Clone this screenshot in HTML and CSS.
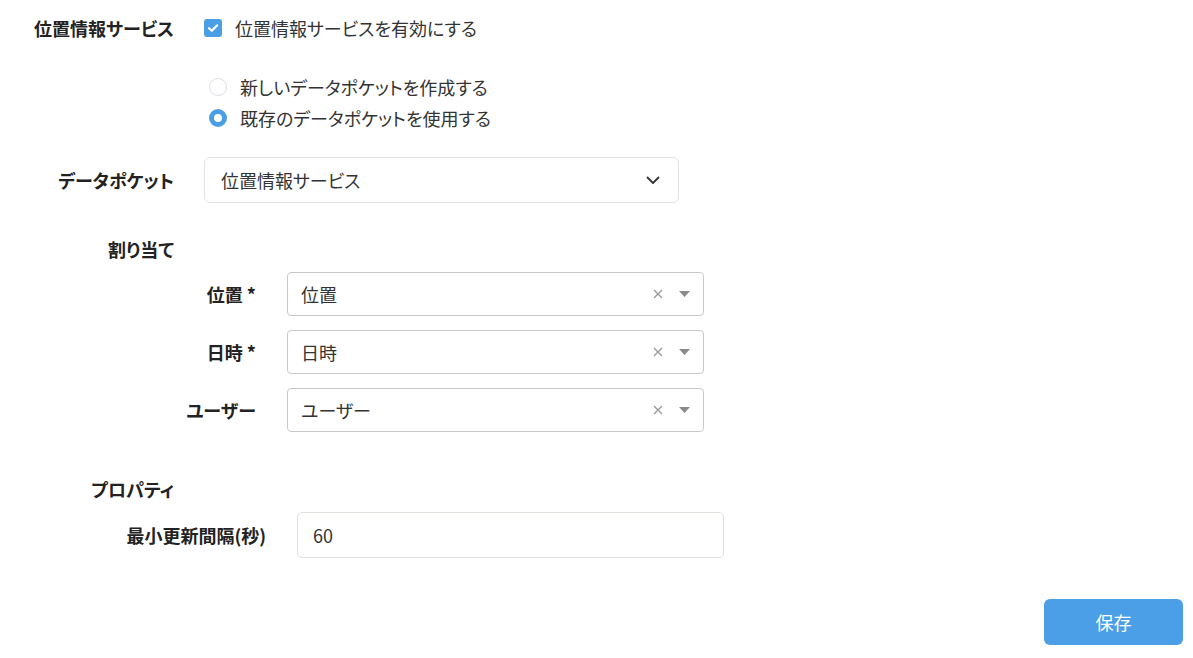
FILE: index.html
```html
<!DOCTYPE html>
<html lang="ja">
<head>
<meta charset="utf-8">
<title>位置情報サービス</title>
<link rel="stylesheet" href="styles.css">
</head>
<body>
<div class="page">
  <div class="row row-enable">
    <div class="label">位置情報サービス</div>
    <label class="check">
      <span class="checkbox"><svg width="12" height="10" viewBox="0 0 12 10"><path d="M2 5.2 L4.8 7.8 L10 2.4" fill="none" stroke="#fff" stroke-width="2.2" stroke-linecap="round" stroke-linejoin="round"/></svg></span>
      <span>位置情報サービスを有効にする</span>
    </label>
  </div>

  <div class="radios">
    <label class="radio"><span class="dot"></span><span>新しいデータポケットを作成する</span></label>
    <label class="radio"><span class="dot on"></span><span>既存のデータポケットを使用する</span></label>
  </div>

  <div class="row row-pocket">
    <div class="label">データポケット</div>
    <div class="select big">
      <span class="value">位置情報サービス</span>
      <svg class="chev" width="14" height="9" viewBox="0 0 14 9"><path d="M1.5 1.5 L7 7 L12.5 1.5" fill="none" stroke="#333" stroke-width="1.8" stroke-linecap="round" stroke-linejoin="round"/></svg>
    </div>
  </div>

  <div class="section-title sec-assign">割り当て</div>

  <div class="assign">
    <div class="arow">
      <div class="label">位置 *</div>
      <div class="select small">
        <span class="value">位置</span>
        <span class="icons"><svg width="10" height="10" viewBox="0 0 10 10"><path d="M1 1 L9 9 M9 1 L1 9" stroke="#9a9a9a" stroke-width="1.4"/></svg><svg width="11" height="6" viewBox="0 0 11 6"><path d="M0 0 H11 L5.5 6 Z" fill="#8a8a8a"/></svg></span>
      </div>
    </div>
    <div class="arow">
      <div class="label">日時 *</div>
      <div class="select small">
        <span class="value">日時</span>
        <span class="icons"><svg width="10" height="10" viewBox="0 0 10 10"><path d="M1 1 L9 9 M9 1 L1 9" stroke="#9a9a9a" stroke-width="1.4"/></svg><svg width="11" height="6" viewBox="0 0 11 6"><path d="M0 0 H11 L5.5 6 Z" fill="#8a8a8a"/></svg></span>
      </div>
    </div>
    <div class="arow">
      <div class="label">ユーザー</div>
      <div class="select small">
        <span class="value">ユーザー</span>
        <span class="icons"><svg width="10" height="10" viewBox="0 0 10 10"><path d="M1 1 L9 9 M9 1 L1 9" stroke="#9a9a9a" stroke-width="1.4"/></svg><svg width="11" height="6" viewBox="0 0 11 6"><path d="M0 0 H11 L5.5 6 Z" fill="#8a8a8a"/></svg></span>
      </div>
    </div>
  </div>

  <div class="section-title sec-props">プロパティ</div>

  <div class="prow">
    <div class="label">最小更新間隔(秒)</div>
    <div class="input">60</div>
  </div>

  <div class="actions">
    <button class="save">保存</button>
  </div>
</div>
</body>
</html>
```

FILE: styles.css
```css
* { box-sizing: border-box; }
html, body { margin: 0; padding: 0; background: #fff; }
body {
  font-family: "Noto Sans CJK JP", "Noto Sans", sans-serif;
  font-size: 18px;
  line-height: 24px;
  color: #333;
  font-feature-settings: "palt";
}
.page {
  width: 1193px;
  padding: 16px 10px 0 0;
  display: flex;
  flex-direction: column;
}
.label {
  font-weight: 700;
  color: #222;
  text-align: right;
}
.row {
  display: grid;
  grid-template-columns: 174px 1fr;
  column-gap: 30px;
  align-items: center;
}
.row-enable { height: 24px; }
.check {
  display: flex;
  align-items: center;
  gap: 13px;
}
.checkbox {
  width: 18px;
  height: 18px;
  border-radius: 3px;
  background: #4a9ee6;
  display: flex;
  align-items: center;
  justify-content: center;
}
.radios {
  margin-top: 31px;
  padding-left: 209px;
  display: flex;
  flex-direction: column;
}
.radio {
  height: 31px;
  display: flex;
  align-items: center;
  gap: 13px;
}
.dot {
  width: 18px;
  height: 18px;
  border-radius: 50%;
  border: 1px solid #dcdfe6;
  background: #fff;
}
.dot.on {
  border: 5px solid #4a9ee6;
}
.row-pocket { margin-top: 24px; }
.select {
  display: flex;
  align-items: center;
  justify-content: space-between;
  background: #fff;
}
.select.big {
  width: 475px;
  height: 46px;
  border: 1px solid #e2e3e8;
  border-radius: 6px;
  padding: 0 18px 0 16px;
}
.select.big .value { color: #333; }
.section-title {
  font-weight: 700;
  color: #222;
  width: 174px;
  text-align: right;
}
.sec-assign { margin-top: 34px; }
.assign {
  margin-top: 11px;
  display: flex;
  flex-direction: column;
  gap: 14px;
}
.arow {
  display: grid;
  grid-template-columns: 256px 417px;
  column-gap: 31px;
  align-items: center;
}
.select.small {
  height: 44px;
  border: 1px solid #c9c9c9;
  border-radius: 4px;
  padding: 0 13px 0 13px;
}
.icons {
  display: flex;
  align-items: center;
  gap: 16px;
}
.sec-props { margin-top: 45px; }
.prow {
  margin-top: 11px;
  display: grid;
  grid-template-columns: 266px 427px;
  column-gap: 31px;
  align-items: center;
}
.input {
  height: 46px;
  border: 1px solid #dfe0e6;
  border-radius: 5px;
  padding: 0 15px;
  display: flex;
  align-items: center;
  color: #333;
}
.actions {
  margin-top: 41px;
  display: flex;
  justify-content: flex-end;
}
.save {
  width: 139px;
  height: 46px;
  border: none;
  border-radius: 6px;
  background: #4a9fe7;
  color: #fff;
  font-family: "Noto Sans CJK JP", sans-serif;
  font-size: 18px;
}
```
